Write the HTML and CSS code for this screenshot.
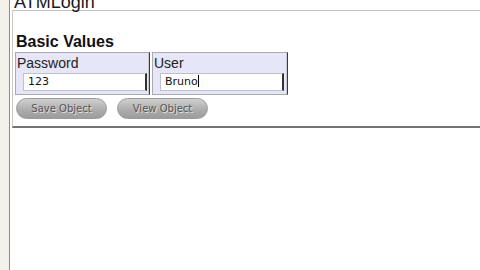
FILE: index.html
```html
<!DOCTYPE html>
<html>
<head>
<meta charset="utf-8">
<link rel="stylesheet" href="styles.css">
</head>
<body>
<div class="page">
  <div class="strip"></div>
  <div class="main">
    <div class="title">ATMLogin</div>
    <div class="box">
      <div class="heading">Basic Values</div>
      <div class="cells">
        <div class="cell">
          <div class="label">Password</div>
          <div class="field">123</div>
        </div>
        <div class="cell cell-user">
          <div class="label">User</div>
          <div class="field">Bruno<span class="caret"></span></div>
        </div>
      </div>
      <div class="buttons">
        <div class="btn">Save Object</div>
        <div class="btn">View Object</div>
      </div>
    </div>
  </div>
</div>
</body>
</html>
```
FILE: styles.css
```css
html, body {
  margin: 0;
  padding: 0;
  background: #ffffff;
  overflow: hidden;
}
.page {
  display: flex;
  width: 480px;
  height: 270px;
}
.strip {
  width: 9px;
  background: #f1f1ea;
  border-right: 1px solid #8c8c8c;
  flex: none;
}
.main {
  flex: 1;
  min-width: 0;
}
.title {
  margin-top: -7px;
  height: 17px;
  padding-left: 4px;
  font-family: "Liberation Sans", Arial, sans-serif;
  font-size: 18px;
  line-height: 18px;
  color: #1a1a1a;
  white-space: nowrap;
}
.box {
  margin-left: 2px;
  border-top: 1px solid #c4c4c4;
  border-left: 1px solid #c8c8c8;
  border-bottom: 2px solid #747474;
  padding: 22px 0 7px 2px;
}
.heading {
  padding-left: 1px;
  font-family: "Liberation Sans", Arial, sans-serif;
  font-weight: bold;
  font-size: 16px;
  line-height: 18px;
  color: #111;
}
.cells {
  display: flex;
  gap: 2px;
  margin-top: 1px;
}
.cell {
  width: 131px;
  background: #e6e6f8;
  border: 1px solid #a9a9b4;
  border-right: 1px solid #3c3c3c;
  box-shadow: inset -1px 0 0 #c8c8d4;
  padding: 2px 1px 3px 1px;
}
.cell-user {
  width: 132px;
}
.label {
  font-family: "Liberation Sans", Arial, sans-serif;
  font-size: 14px;
  line-height: 16px;
  color: #222;
}
.field {
  margin: 2px 0 0 6px;
  width: 117px;
  height: 16px;
  background: #ffffff;
  border: 1px solid #c0c0c8;
  border-right: 2px solid #333;
  padding-left: 4px;
  font-family: "DejaVu Sans", Verdana, sans-serif;
  font-size: 11px;
  line-height: 16px;
  color: #111;
}
.caret {
  display: inline-block;
  width: 1px;
  height: 12px;
  background: #000;
  vertical-align: -2px;
}
.buttons {
  display: flex;
  gap: 10px;
  margin-top: 3px;
  padding-left: 1px;
}
.btn {
  width: 89px;
  height: 19px;
  border: 1px solid #9c9c9c;
  border-radius: 11px;
  background: linear-gradient(#d0d0d0, #ababab 60%, #9c9c9c);
  font-family: "DejaVu Sans", Verdana, sans-serif;
  font-size: 10px;
  line-height: 19px;
  text-align: center;
  color: #555555;
  text-shadow: 1px 1px 0 #e0e0e0;
}
```
